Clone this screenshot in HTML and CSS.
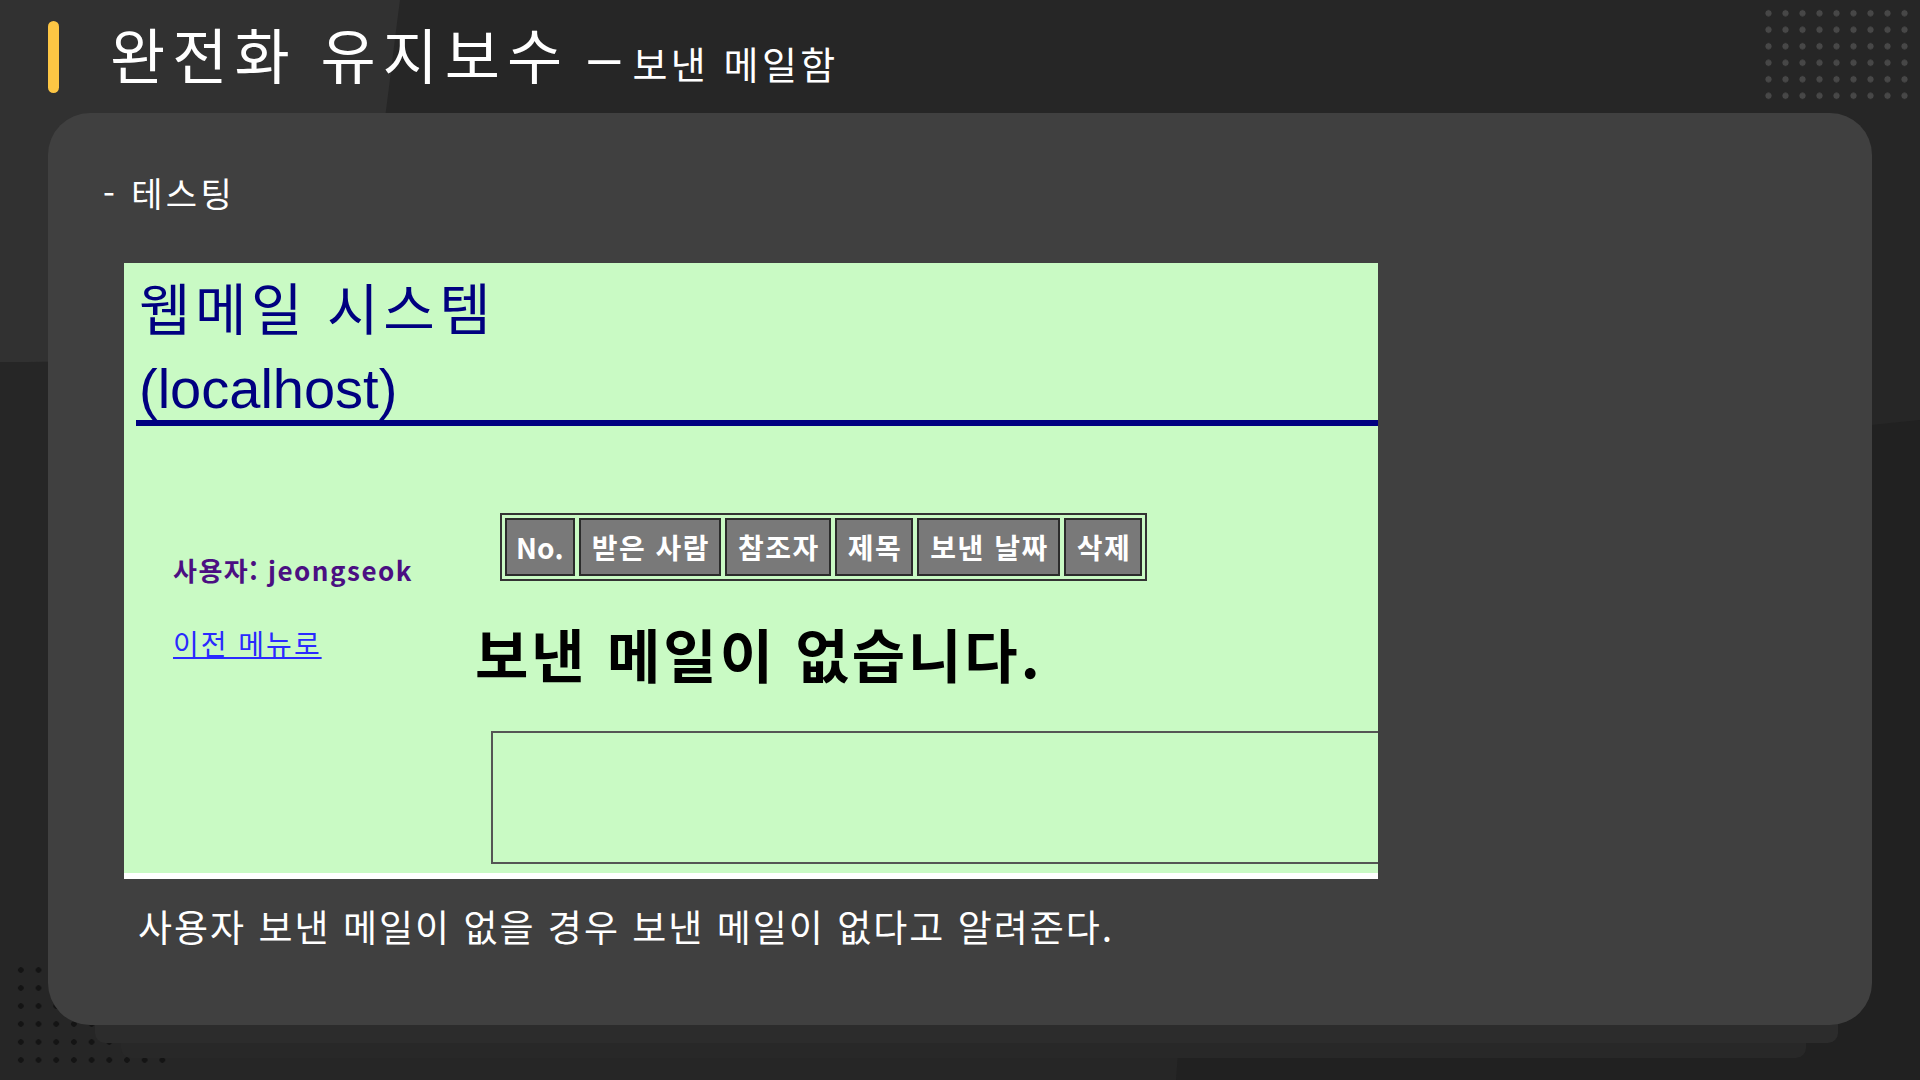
FILE: index.html
```html
<!DOCTYPE html>
<html lang="ko">
<head>
<meta charset="utf-8">
<title>완전화 유지보수 – 보낸 메일함</title>
<link rel="stylesheet" href="styles.css">
</head>
<body>
<div class="page">
  <svg class="bg" width="1920" height="1080" viewBox="0 0 1920 1080" xmlns="http://www.w3.org/2000/svg">
    <rect width="1920" height="1080" fill="#212121"/>
    <path d="M0 0H1920V420C1500 460 1230 560 1200 760L1176 1080H0Z" fill="#262626"/>
    <path d="M0 0H400C385 110 375 250 330 330C300 360 100 362 0 362Z" fill="#313131"/>
  </svg>
  <div class="dots dots-tr"></div>
  <div class="dots dots-bl"></div>

  <header class="header">
    <span class="bar"></span>
    <h1 class="title">완전화 유지보수<span class="dash">–</span><span class="sub">보낸 메일함</span></h1>
  </header>

  <main class="card">
    <p class="section">- 테스팅</p>
    <div class="shot">
      <h2 class="shot-title"><span class="shot-ko">웹메일 시스템</span><span class="shot-en">(localhost)</span></h2>
      <div class="shot-body">
        <aside class="side">
          <p class="user">사용자: jeongseok</p>
          <a class="back" href="#">이전 메뉴로</a>
        </aside>
        <div class="shot-main">
          <div class="thead">
            <span class="th th-no">No.</span>
            <span class="th">받은 사람</span>
            <span class="th">참조자</span>
            <span class="th">제목</span>
            <span class="th">보낸 날짜</span>
            <span class="th">삭제</span>
          </div>
          <h3 class="empty-msg">보낸 메일이 없습니다.</h3>
          <div class="empty-box"></div>
        </div>
      </div>
    </div>
    <p class="caption">사용자 보낸 메일이 없을 경우 보낸 메일이 없다고 알려준다.</p>
  </main>
</div>
</body>
</html>
```

FILE: styles.css
```css
html, body {
  margin: 0;
  padding: 0;
  background: #212121;
}

body {
  font-family: "Noto Sans CJK KR", "Noto Sans", sans-serif;
}

.page {
  position: relative;
  z-index: 0;
  width: 1920px;
  height: 1080px;
  overflow: hidden;
}

.bg {
  position: absolute;
  left: 0;
  top: 0;
  z-index: -2;
}

.dots {
  position: absolute;
  z-index: -2;
}

.dots-tr {
  left: 1760px;
  top: 5px;
  width: 153px;
  height: 99px;
  background: radial-gradient(circle, #474747 2.8px, transparent 3.4px) 0 0 / 17px 16.5px;
}

.dots-bl {
  left: 12px;
  top: 961px;
  width: 160px;
  height: 108px;
  background: radial-gradient(circle, #141414 2.5px, transparent 3.1px) 0 0 / 17.7px 18px;
}

/* header */
.header {
  height: 113px;
  box-sizing: border-box;
  padding: 21px 0 0 48px;
  display: flex;
  align-items: flex-start;
}

.bar {
  width: 11px;
  height: 72px;
  border-radius: 6px;
  background: #fdc644;
  flex: none;
}

.title {
  margin: 2px 0 0 51px;
  font-size: 60px;
  line-height: 1;
  font-weight: 400;
  letter-spacing: 7px;
  color: #ffffff;
  white-space: nowrap;
}

.dash {
  display: inline-block;
  margin-left: 16px;
  letter-spacing: 0;
  transform: scaleX(1.2);
  transform-origin: left center;
}

.sub {
  font-size: 38px;
  font-weight: 400;
  letter-spacing: 3.5px;
  margin-left: 15px;
}

/* main card */
.card {
  position: relative;
  margin-left: 48px;
  width: 1824px;
  height: 912px;
  box-sizing: border-box;
  padding: 63px 0 0 55px;
  background: #404040;
  border-radius: 42px;
}

.card::before,
.card::after {
  content: "";
  position: absolute;
  border-radius: 0 0 10px 10px;
}

.card::before {
  left: 47px;
  right: 34px;
  top: 600px;
  bottom: -18px;
  background: #2c2c2c;
  z-index: -1;
}

.card::after {
  left: 73px;
  right: 66px;
  top: 600px;
  bottom: -33px;
  background: #282828;
  z-index: -2;
}

.section {
  margin: 0;
  font-size: 34px;
  line-height: 1;
  font-weight: 400;
  letter-spacing: 3.4px;
  color: #ffffff;
}

/* screenshot of web mail */
.shot {
  margin: 53px 0 0 21px;
  width: 1254px;
  height: 616px;
  box-sizing: border-box;
  background: #c9fac4;
  border-bottom: 6px solid #ffffff;
  overflow: hidden;
}

.shot-title {
  margin: 0 0 0 12px;
  height: 163px;
  box-sizing: border-box;
  padding: 9px 0 0 3px;
  font-family: "Liberation Sans", "Noto Sans CJK KR", sans-serif;
  font-size: 56px;
  line-height: 78px;
  font-weight: 400;
  color: #000080;
  border-bottom: 6px solid #000080;
}

.shot-ko {
  display: block;
  letter-spacing: 4.5px;
}

.shot-en {
  display: block;
}

.shot-body {
  display: flex;
}

.side {
  flex: none;
  width: 351px;
  box-sizing: border-box;
  padding: 131px 0 0 49px;
}

.user {
  margin: 0;
  font-size: 26px;
  line-height: 1;
  font-weight: 700;
  letter-spacing: 1.5px;
  color: #4b0f82;
}

.back {
  display: inline-block;
  margin-top: 46px;
  font-size: 28px;
  line-height: 1;
  letter-spacing: 2px;
  color: #2a2aff;
  text-decoration: underline;
}

.shot-main {
  flex: 1;
  min-width: 0;
  padding-top: 87px;
  display: flex;
  flex-direction: column;
  align-items: flex-start;
}

.thead {
  margin-left: 25px;
  display: flex;
  gap: 4px;
  padding: 3px;
  border: 2px solid #333333;
}

.th {
  box-sizing: border-box;
  height: 58px;
  padding: 0 9px 0 11px;
  border: 2px solid #2b2b2b;
  background: #797979;
  color: #ffffff;
  font-size: 28px;
  line-height: 54px;
  font-weight: 700;
  letter-spacing: 1.5px;
  white-space: nowrap;
}

.th-no {
  letter-spacing: 0;
  padding: 0 9px;
}

.empty-msg {
  margin: 43px 0 0 0;
  font-size: 58px;
  line-height: 1;
  font-weight: 700;
  letter-spacing: 3px;
  color: #000000;
}

.empty-box {
  flex: none;
  margin: 49px 0 0 16px;
  width: 1100px;
  height: 133px;
  box-sizing: border-box;
  border: 2px solid #555555;
}

.caption {
  margin: 29px 0 0 35px;
  font-size: 37px;
  line-height: 1;
  font-weight: 400;
  letter-spacing: 2px;
  color: #ffffff;
  white-space: nowrap;
}
```
